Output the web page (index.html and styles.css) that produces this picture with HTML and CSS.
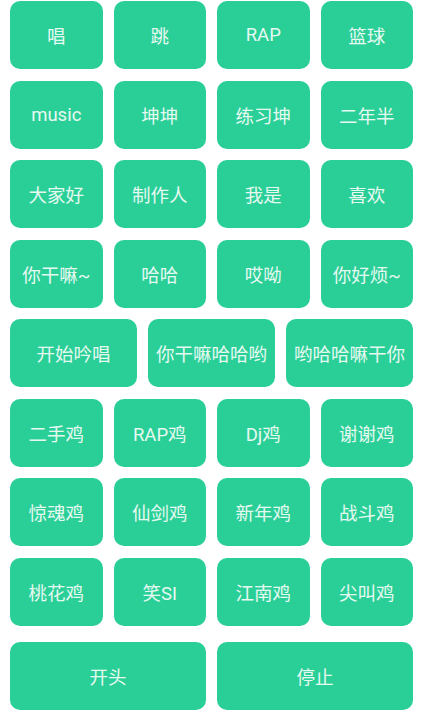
FILE: index.html
```html
<!DOCTYPE html>
<html lang="zh">
<head>
  <meta charset="UTF-8">
  <meta name="viewport" content="width=device-width, initial-scale=1.0">
  <title>鸡音盒</title>
  <link rel="stylesheet" href="styles.css">
</head>
<body>
  <div class="board">
    <button class="btn">唱</button>
    <button class="btn">跳</button>
    <button class="btn">RAP</button>
    <button class="btn">篮球</button>

    <button class="btn">music</button>
    <button class="btn">坤坤</button>
    <button class="btn">练习坤</button>
    <button class="btn">二年半</button>

    <button class="btn">大家好</button>
    <button class="btn">制作人</button>
    <button class="btn">我是</button>
    <button class="btn">喜欢</button>

    <button class="btn">你干嘛~</button>
    <button class="btn">哈哈</button>
    <button class="btn">哎呦</button>
    <button class="btn">你好烦~</button>

    <button class="btn btn-wide">开始吟唱</button>
    <button class="btn btn-wide">你干嘛哈哈哟</button>
    <button class="btn btn-wide">哟哈哈嘛干你</button>

    <button class="btn">二手鸡</button>
    <button class="btn">RAP鸡</button>
    <button class="btn">Dj鸡</button>
    <button class="btn">谢谢鸡</button>

    <button class="btn">惊魂鸡</button>
    <button class="btn">仙剑鸡</button>
    <button class="btn">新年鸡</button>
    <button class="btn">战斗鸡</button>

    <button class="btn">桃花鸡</button>
    <button class="btn">笑SI</button>
    <button class="btn">江南鸡</button>
    <button class="btn">尖叫鸡</button>

    <button class="btn btn-half btn-ctrl">开头</button>
    <button class="btn btn-half btn-ctrl">停止</button>
  </div>
</body>
</html>
```

FILE: styles.css
```css
body {
  margin: 0;
  padding: 0;
  background-color: #ffffff;
  font-family: Roboto, 'Noto Sans CJK SC', sans-serif;
}

.board {
  display: grid;
  grid-template-columns: repeat(12, 1fr);
  grid-template-rows: repeat(8, 68px) 73px;
  column-gap: 11px;
  row-gap: 11.5px;
  padding: 1px 8px 0 10px;
}

.btn {
  grid-column: span 3;
  border: none;
  border-radius: 10px;
  background-color: #2acf97;
  color: #e6f9f1;
  font-family: Roboto, 'Noto Sans CJK SC', sans-serif;
  font-size: 18.5px;
  padding: 0;
  white-space: nowrap;
}

.btn-wide {
  grid-column: span 4;
}

.btn-half {
  grid-column: span 6;
}

.btn-ctrl {
  margin-top: 5px;
}
```
